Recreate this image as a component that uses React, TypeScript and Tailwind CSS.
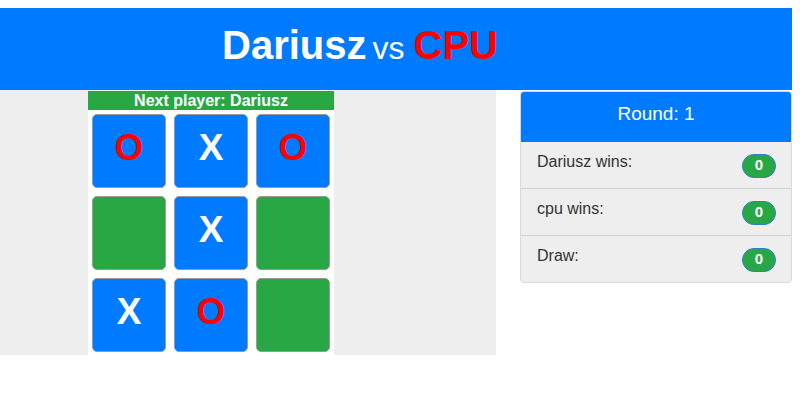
import React from 'react';

type Mark = 'X' | 'O' | null;

const board: Mark[] = ['O', 'X', 'O', null, 'X', null, 'X', 'O', null];

const stats = [
  { label: 'Dariusz wins:', value: 0 },
  { label: 'cpu wins:', value: 0 },
  { label: 'Draw:', value: 0 },
];

const Cell: React.FC<{ mark: Mark }> = ({ mark }) => (
  <div
    className={`m-[4px] w-[74px] h-[74px] rounded-[5px] border border-[#9a9a9a] flex items-center justify-center pb-[8px] text-[37px] font-bold leading-none ${
      mark ? 'bg-[#007bff]' : 'bg-[#28a745]'
    } ${mark === 'O' ? 'text-[#ff0000]' : 'text-white'}`}
  >
    {mark}
  </div>
);

export default function App() {
  return (
    <div className="w-[792px] bg-white font-['Liberation_Sans',Arial,sans-serif] pt-2 h-[400px]">
      {/* Header */}
      <header className="h-[82px] bg-[#007bff] flex">
        <div className="w-[720px] flex items-center justify-center pb-2">
          <h1 className="flex items-baseline text-[40px] font-bold text-white leading-none whitespace-nowrap">
            <span>Dariusz</span>
            <span className="ml-[6px] mr-[9px] text-[32px] font-normal">vs</span>
            <span className="text-[#ff0000]">CPU</span>
          </h1>
        </div>
      </header>

      <div className="flex">
        {/* Game area */}
        <section className="w-[496px] h-[265px] bg-[#eeeeee] pl-[88px]">
          <div className="w-[246px] h-[265px] bg-white pt-px">
            <div className="h-[19px] bg-[#28a745] text-white font-bold text-[16px] leading-[19px] text-center">
              Next player: Dariusz
            </div>
            <div className="grid grid-cols-3">
              {board.map((m, i) => (
                <Cell key={i} mark={m} />
              ))}
            </div>
          </div>
        </section>

        {/* Score card */}
        <aside className="ml-[24px] mt-px w-[272px] rounded-[4px] border border-[#d9d9d9] bg-[#eeeeee] overflow-hidden self-start">
          <div className="h-[50px] bg-[#007bff] text-white text-[19px] flex items-center justify-center pb-[6px]">
            Round: 1
          </div>
          {stats.map((s, i) => (
            <div
              key={s.label}
              className={`h-[46px] flex justify-between pl-[16px] pr-[15px] ${
                i > 0 ? 'border-t border-[#d4d4d4] h-[47px]' : ''
              }`}
            >
              <span className="text-[16px] text-[#333] leading-6 mt-[8px]">{s.label}</span>
              <span className="self-center mt-[1px] h-[24px] w-[34px] rounded-full bg-[#28a745] border border-[#2f80c8] text-white font-bold text-[15px] flex items-center justify-center">
                {s.value}
              </span>
            </div>
          ))}
        </aside>
      </div>
    </div>
  );
}
